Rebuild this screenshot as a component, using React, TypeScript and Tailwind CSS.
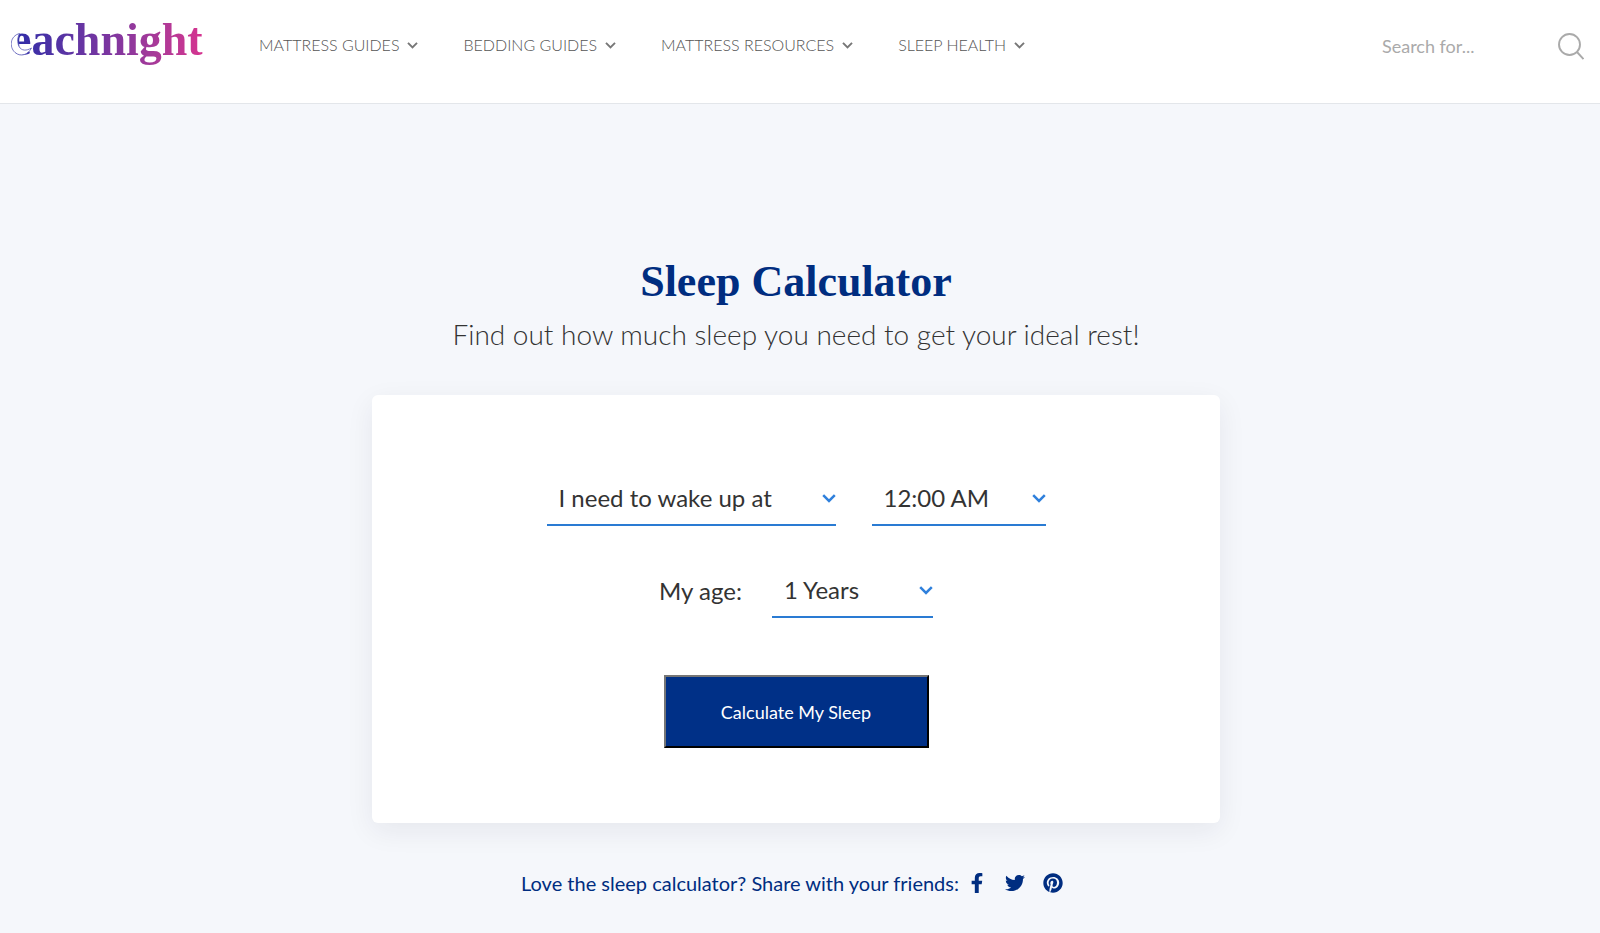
import { useState } from "react";
import type { ReactNode } from "react";
import { FaFacebookF, FaPinterest, FaTwitter } from "react-icons/fa";

const menuItems = ["MATTRESS GUIDES", "BEDDING GUIDES", "MATTRESS RESOURCES", "SLEEP HEALTH"];

const hours = Array.from({ length: 24 }, (_, i) => `${i % 12 === 0 ? 12 : i % 12}:00 ${i < 12 ? "AM" : "PM"}`);
const ages = Array.from({ length: 80 }, (_, i) => `${i + 1} Years`);

function Chevron({ className }: { className: string }) {
  return (
    <svg viewBox="0 0 14 9" className={className} fill="none" stroke="currentColor" strokeWidth="2.5" aria-hidden="true">
      <path d="M1.2 1.2 7 7l5.8-5.8" />
    </svg>
  );
}

function Logo() {
  return (
    <a href="#" className="relative block w-[196px] shrink-0 font-['Liberation_Serif'] text-[46px] leading-[56px] font-bold">
      <span className="bg-linear-to-r from-[#2a2aa8] via-[#7a35a0] to-[#d6338f] bg-clip-text text-transparent">
        eachnight
      </span>
      {/* crescent moon cut into the first letter */}
      <svg viewBox="0 0 22 24" className="absolute top-[20px] left-0 h-6 w-[22px]" fill="#fff" stroke="#5a5ab8" strokeWidth="0.8" aria-hidden="true">
        <path d="M8.5 1.5C-1 4-2 15 4 20.5c6 5 13 2 16.5-4.5-5 3-10 3-12.5-1.5-2-4.500-1.500-9 .5-13Z" />
      </svg>
    </a>
  );
}

type PickerProps = {
  id: string;
  label: string;
  value: string;
  options: string[];
  onChange: (value: string) => void;
  className: string;
};

function Picker({ id, label, value, options, onChange, className }: PickerProps) {
  return (
    <div className={`relative ${className}`}>
      <select
        id={id}
        aria-label={label}
        value={value}
        onChange={(e) => onChange(e.target.value)}
        className="h-[54px] w-full appearance-none border-b-2 border-[#2a7bd3] bg-transparent pr-8 pl-3 text-2xl text-[#333]"
      >
        {options.map((option) => (
          <option key={option}>{option}</option>
        ))}
      </select>
      <Chevron className="pointer-events-none absolute top-[22px] right-0 h-[9px] w-[14px] text-[#2f80dc]" />
    </div>
  );
}

function ShareLink({ name, children }: { name: string; children: ReactNode }) {
  return (
    <a href="#" aria-label={name} className="flex w-5 justify-center">
      {children}
    </a>
  );
}

export default function App() {
  const [mode, setMode] = useState("I need to wake up at");
  const [time, setTime] = useState("12:00 AM");
  const [age, setAge] = useState("1 Years");

  return (
    <div className="min-h-screen bg-[#f5f7fb] font-['Lato',sans-serif]">
      <header className="flex h-[104px] items-start border-b border-[#e3e6ea] bg-white pt-3 pr-4 pl-[11px]">
        <Logo />
        <nav className="ml-[52px] flex gap-[45px] pt-[21px]">
          {menuItems.map((item) => (
            <button key={item} type="button" className="flex items-center gap-2 text-base leading-6 font-light whitespace-nowrap text-[#555]">
              {item}
              <Chevron className="h-[7px] w-[11px] text-[#777]" />
            </button>
          ))}
        </nav>
        <form className="ml-auto flex items-center pt-5" onSubmit={(e) => e.preventDefault()}>
          <input
            type="search"
            aria-label="Search"
            placeholder="Search for..."
            className="w-44 text-lg leading-7 outline-none placeholder:text-[#aaa]"
          />
          <button type="submit" aria-label="Submit search">
            <svg viewBox="0 0 26 27" className="h-[27px] w-[26px]" fill="none" stroke="#aaa" strokeWidth="1.9" aria-hidden="true">
              <circle cx="11.5" cy="11.5" r="10.5" />
              <path d="m19 19 6.5 7" />
            </svg>
          </button>
        </form>
      </header>

      <main className="flex flex-col items-center pt-[152px] pr-2">
        <h1 className="font-['Liberation_Serif'] text-[44px] leading-[52px] font-bold text-[#002d80]">Sleep Calculator</h1>
        <p className="mt-1 text-[28px] leading-[44px] font-light text-[#333]">
          Find out how much sleep you need to get your ideal rest!
        </p>

        <form
          className="mt-[39px] flex w-full max-w-[848px] flex-col items-center rounded-md bg-white pt-[77px] pb-[75px] shadow-[0_8px_28px_rgba(30,30,60,0.07)]"
          onSubmit={(e) => e.preventDefault()}
        >
          <div className="flex gap-9">
            <Picker
              id="mode"
              label="Calculation"
              value={mode}
              options={["I need to wake up at", "I want to go to bed at"]}
              onChange={setMode}
              className="w-[289px]"
            />
            <Picker id="time" label="Time" value={time} options={hours} onChange={setTime} className="w-[174px]" />
          </div>
          <div className="mt-[38px] flex items-center gap-[30px]">
            <label htmlFor="age" className="text-2xl text-[#333]">
              My age:
            </label>
            <Picker id="age" label="My age" value={age} options={ages} onChange={setAge} className="w-[161px]" />
          </div>
          <button
            type="submit"
            className="mt-[57px] h-[73px] w-[265px] border-2 border-t-[#767676] border-r-black border-b-black border-l-[#767676] bg-[#003087] text-lg text-white"
          >
            Calculate My Sleep
          </button>
        </form>

        <div className="mt-[46px] flex items-center pr-2 text-xl leading-7 text-[#002d80]">
          <span>Love the sleep calculator? Share with your friends:</span>
          <div className="ml-2 flex gap-[18px]">
            <ShareLink name="Facebook">
              <FaFacebookF className="size-5" />
            </ShareLink>
            <ShareLink name="Twitter">
              <FaTwitter className="size-5" />
            </ShareLink>
            <ShareLink name="Pinterest">
              <FaPinterest className="size-5" />
            </ShareLink>
          </div>
        </div>
      </main>
    </div>
  );
}
